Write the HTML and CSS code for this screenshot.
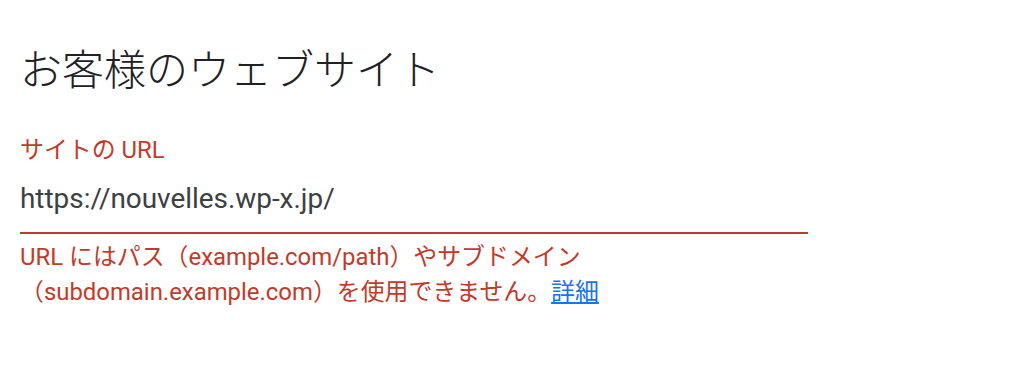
FILE: index.html
```html
<!DOCTYPE html>
<html lang="ja">
<head>
<meta charset="utf-8">
<link rel="stylesheet" href="styles.css">
</head>
<body>
<main class="page">
  <h1 class="title">お客様のウェブサイト</h1>
  <div class="field">
    <label class="label">サイトの URL</label>
    <div class="input">https://nouvelles.wp-x.jp/</div>
    <p class="error">URL にはパス（example.com/path）やサブドメイン<br>（subdomain.example.com）を使用できません。<a class="link" href="#">詳細</a></p>
  </div>
</main>
</body>
</html>
```
FILE: styles.css
```css
html, body {
  margin: 0;
  padding: 0;
  background: #fff;
}
body {
  font-family: Roboto, "Noto Sans CJK JP", sans-serif;
  color: #202124;
}
.page {
  padding: 42px 20px 0 20px;
}
.title {
  margin: 0;
  font-size: 42px;
  font-weight: 300;
  line-height: 58px;
  color: #202124;
}
.field {
  width: 788px;
  margin-top: 35px;
}
.label {
  display: block;
  font-size: 23.9px;
  line-height: 30px;
  color: #c53929;
}
.input {
  font-size: 27.9px;
  line-height: 36px;
  padding: 16px 0 15px;
  color: #3c4043;
  border-bottom: 2px solid #c53929;
}
.error {
  margin: 6px 0 0;
  font-size: 23.9px;
  line-height: 35px;
  color: #c53929;
}
.link {
  color: #1a73e8;
  text-decoration: underline;
}
```
